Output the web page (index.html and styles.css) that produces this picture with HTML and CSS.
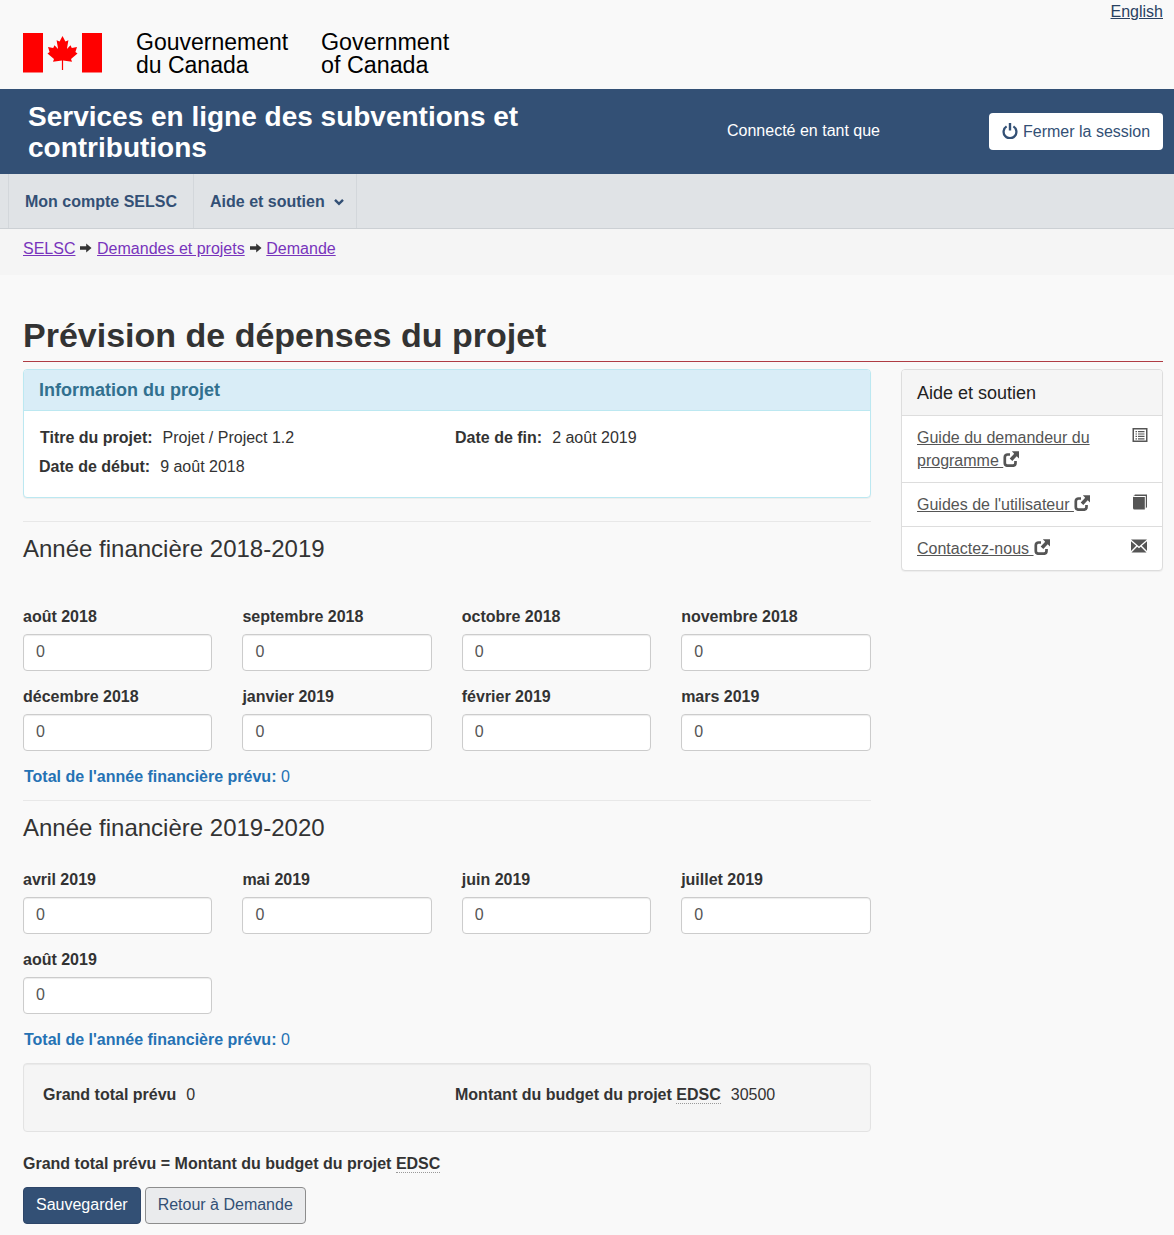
FILE: index.html
```html
<!DOCTYPE html>
<html lang="fr">
<head>
<meta charset="utf-8">
<title>Prévision de dépenses du projet</title>
<link rel="stylesheet" href="styles.css">
</head>
<body>
<svg class="defs" width="0" height="0" aria-hidden="true">
  <defs>
    <symbol id="ext" viewBox="0 0 16 16">
      <path d="M7 3.500H4.500A2.700 2.700 0 0 0 1.800 6.200V12A2.700 2.700 0 0 0 4.500 14.700H9.800A2.700 2.700 0 0 0 12.500 12V10" fill="none" stroke="currentColor" stroke-width="2.700"/>
      <path d="M8.800 0.300H16V7.500L13.700 5.200 9.300 9.900 6.700 7.400 11.200 2.700z" fill="currentColor"/>
    </symbol>
    <symbol id="arrow" viewBox="0 0 12 10">
      <path d="M0 3.200h6.200V0.500L11.500 5 6.200 9.500V6.800H0z" fill="currentColor"/>
    </symbol>
  </defs>
</svg>

<div class="lang"><a href="#">English</a></div>
<header class="sig">
  <svg class="flag" viewBox="0 0 79 40" width="79" height="40" aria-hidden="true">
    <rect x="0" y="0" width="20" height="39.500" fill="#f00"/>
    <rect x="59" y="0" width="20" height="39.500" fill="#f00"/>
    <path fill="#f00" d="M39.500 3 36.600 8.500 33.600 7.300 35.100 16 31.500 12.300 30.200 15 25 14 26.600 19 24.500 20.500 31 26 30 28.700 38.900 27.600V37H40.100V27.600L49 28.700 48 26 54.500 20.500 52.400 19 54 14 48.800 15 47.500 12.300 43.900 16 45.400 7.300 42.400 8.500z"/>
  </svg>
  <div class="sig-text sig-fr">Gouvernement<br>du Canada</div>
  <div class="sig-text">Government<br>of Canada</div>
</header>

<section class="banner">
  <div class="app-title">Services en ligne des subventions et contributions</div>
  <div class="connected">Connecté en tant que</div>
  <a class="logout" href="#">
    <svg class="power" viewBox="0 0 16 16" width="16" height="16" aria-hidden="true">
      <path d="M4.600 3.400A6.400 6.400 0 1 0 11.400 3.400" fill="none" stroke="currentColor" stroke-width="2.300"/>
      <path d="M8 0V7.500" fill="none" stroke="currentColor" stroke-width="2.400"/>
    </svg>
    Fermer la session
  </a>
</section>

<nav class="menu">
  <a class="menu-item" href="#">Mon compte SELSC</a>
  <a class="menu-item" href="#">Aide et soutien
    <svg class="caret" viewBox="0 0 10 8" width="10" height="8" aria-hidden="true"><path d="M1 1.800 5 5.800 9 1.800" fill="none" stroke="currentColor" stroke-width="2.400"/></svg>
  </a>
</nav>

<div class="crumbs">
  <a class="abbr-link" href="#">SELSC</a>
  <svg class="crumb-arrow"><use href="#arrow"/></svg>
  <a href="#">Demandes et projets</a>
  <svg class="crumb-arrow"><use href="#arrow"/></svg>
  <a href="#">Demande</a>
</div>

<main class="page">
  <h1 class="title">Prévision de dépenses du projet</h1>
  <div class="columns">
    <div class="main-col">
      <section class="info">
        <h2 class="info-head">Information du projet</h2>
        <div class="info-body">
          <div class="info-grid">
            <p class="info-first"><b>Titre du projet:</b><span>Projet / Project 1.2</span></p>
            <p><b>Date de fin:</b><span>2 août 2019</span></p>
            <p><b>Date de début:</b><span>9 août 2018</span></p>
          </div>
        </div>
      </section>

      <hr class="rule rule-first">
      <h2 class="year year-first">Année financière 2018-2019</h2>
      <div class="months">
        <label class="field"><span>août 2018</span><input value="0"></label>
        <label class="field"><span>septembre 2018</span><input value="0"></label>
        <label class="field"><span>octobre 2018</span><input value="0"></label>
        <label class="field"><span>novembre 2018</span><input value="0"></label>
        <label class="field"><span>décembre 2018</span><input value="0"></label>
        <label class="field"><span>janvier 2019</span><input value="0"></label>
        <label class="field"><span>février 2019</span><input value="0"></label>
        <label class="field"><span>mars 2019</span><input value="0"></label>
      </div>
      <p class="total"><b>Total de l'année financière prévu:</b> 0</p>

      <hr class="rule rule-second">
      <h2 class="year year-second">Année financière 2019-2020</h2>
      <div class="months">
        <label class="field"><span>avril 2019</span><input value="0"></label>
        <label class="field"><span>mai 2019</span><input value="0"></label>
        <label class="field"><span>juin 2019</span><input value="0"></label>
        <label class="field"><span>juillet 2019</span><input value="0"></label>
        <label class="field"><span>août 2019</span><input value="0"></label>
      </div>
      <p class="total"><b>Total de l'année financière prévu:</b> 0</p>

      <div class="well">
        <p><b>Grand total prévu</b><span>0</span></p>
        <p><b>Montant du budget du projet <abbr>EDSC</abbr></b><span>30500</span></p>
      </div>

      <p class="equation"><b>Grand total prévu = Montant du budget du projet <abbr>EDSC</abbr></b></p>
      <div class="actions">
        <button class="btn btn-primary" type="button">Sauvegarder</button>
        <button class="btn btn-default" type="button">Retour à Demande</button>
      </div>
    </div>

    <aside class="help">
      <h2 class="help-head">Aide et soutien</h2>
      <div class="help-row">
        <a href="#">Guide du demandeur du programme <svg class="ext"><use href="#ext"/></svg></a>
        <svg class="help-icon" viewBox="0 0 16 16" aria-hidden="true">
          <path fill-rule="evenodd" fill="currentColor" d="M.5 1h15v14H.5zM2 2.500v11h12v-11z"/>
          <path fill="currentColor" d="M3.500 4h1.500v1.200H3.500zM6 4h6.500v1.200H6zM3.500 6.400h1.500v1.200H3.500zM6 6.400h6.500v1.200H6zM3.500 8.800h1.500V10H3.500zM6 8.800h6.500V10H6zM3.500 11.200h1.500v1.200H3.500zM6 11.200h6.500v1.200H6z"/>
        </svg>
      </div>
      <div class="help-row">
        <a href="#">Guides de l'utilisateur <svg class="ext"><use href="#ext"/></svg></a>
        <svg class="help-icon" viewBox="0 0 16 16" aria-hidden="true">
          <path fill="currentColor" d="M1 2.500 3 .5h12v12.500l-1.200 1.500v-12.500H2.800v-.5zM1 3h11.800v12.500H2.500A1.500 1.500 0 0 1 1 14z"/>
        </svg>
      </div>
      <div class="help-row">
        <a href="#">Contactez-nous <svg class="ext"><use href="#ext"/></svg></a>
        <svg class="help-icon" viewBox="1 0 16 16" aria-hidden="true">
          <path fill="currentColor" d="M0 1.500h16L8 8.400zM0 3.200 5.200 7.800 0 13zM16 3.200 10.800 7.800 16 13zM6.200 8.800 8 10.300l1.800-1.500L15.500 14.500H.5z"/>
        </svg>
      </div>
    </aside>
  </div>
</main>
</body>
</html>
```

FILE: styles.css
```css
* { box-sizing: border-box; }

html, body { margin: 0; padding: 0; }

body {
  background: #f9f9f9;
  color: #333;
  font-family: "Liberation Sans", Arial, sans-serif;
  font-size: 16px;
  line-height: 23px;
}

.defs { display: block; height: 0; }

.lang {
  display: flex;
  justify-content: flex-end;
  height: 23px;
  padding-right: 11px;
  line-height: 23px;
}
.lang a { color: #284162; }

.sig {
  display: flex;
  align-items: flex-start;
  height: 66px;
  padding: 10px 0 0 23px;
}
.flag { flex: none; }
.sig-text {
  color: #000;
  font-size: 23.300px;
  line-height: 23px;
  margin-left: 34px;
  margin-top: -2px;
}
.sig-fr { font-size: 23px; width: 151px; }

.banner {
  display: flex;
  align-items: center;
  height: 85px;
  background: #335075;
  color: #fff;
  padding: 0 11px 0 28px;
}
.app-title {
  width: 699px;
  padding-right: 180px;
  font-size: 28px;
  font-weight: 700;
  line-height: 31px;
}
.connected { width: 262px; margin-bottom: 2px; }
.logout {
  display: flex;
  align-items: center;
  gap: 5px;
  width: 174px;
  height: 37px;
  padding-left: 13px;
  background: #fff;
  border-radius: 4px;
  color: #335075;
  text-decoration: none;
}
.power { flex: none; margin-top: -2px; }

.menu {
  display: flex;
  height: 55px;
  padding-left: 8px;
  background: #e0e3e6;
  border-bottom: 1px solid #ccd0d4;
}
.menu-item {
  display: flex;
  align-items: center;
  gap: 9px;
  padding: 0 16px;
  border-left: 1px solid #d3d7db;
  color: #335075;
  font-weight: 700;
  text-decoration: none;
}
.menu-item:last-child {
  padding-right: 12px;
  border-right: 1px solid #d3d7db;
}
.caret { flex: none; margin-top: 2px; }

.crumbs {
  display: flex;
  align-items: center;
  gap: 4.800px;
  height: 46px;
  padding: 0 0 8px 23px;
  background: #f5f5f5;
}
.crumbs a { color: #7834bc; }
.crumb-arrow { width: 12px; height: 10px; color: #333; }

.page { padding: 0 11px 0 23px; }

.title {
  margin: 38px 0 7px;
  height: 49px;
  border-bottom: 1px solid #af3c43;
  color: #333;
  font-size: 34px;
  font-weight: 700;
  line-height: 44px;
}

.columns {
  display: flex;
  align-items: flex-start;
  gap: 30px;
  margin-top: 7px;
}
.main-col { width: 848px; flex: none; }

.info {
  height: 129px;
  background: #fff;
  border: 1px solid #bce8f1;
  border-radius: 4px;
  box-shadow: 0 1px 1px rgba(0,0,0,.05);
  overflow: hidden;
}
.info-head {
  margin: 0;
  height: 41px;
  padding: 0 15px;
  background: #d9edf7;
  border-bottom: 1px solid #bce8f1;
  color: #31708f;
  font-size: 18px;
  font-weight: 700;
  line-height: 41px;
}
.info-body { padding: 15px 15px 0; }
.info-grid {
  display: grid;
  grid-template-columns: 416px 1fr;
  row-gap: 6px;
}
.info-grid p { margin: 0; }
.info-grid span { margin-left: 10px; }
.info-first { padding-left: 1px; }

.rule {
  margin: 0;
  border: 0;
  border-top: 1px solid #e8e8e8;
}
.rule-first { margin-top: 23px; }
.rule-second { margin-top: 12px; }

.year {
  margin: 0;
  color: #333;
  font-size: 24px;
  font-weight: 400;
  line-height: 26px;
}
.year-first { margin: 14px 0 43px; }
.year-second { margin: 14px 0 27px; }

.months {
  display: grid;
  grid-template-columns: repeat(4, 1fr);
  column-gap: 30px;
  row-gap: 14px;
  margin-right: .5px;
}
.field { display: block; }
.field span {
  display: block;
  margin-bottom: 6px;
  font-weight: 700;
}
.field input {
  display: block;
  width: 100%;
  height: 37px;
  padding: 5px 12px 7px;
  background: #fff;
  border: 1px solid #ccc;
  border-radius: 4px;
  box-shadow: inset 0 1px 1px rgba(0,0,0,.075);
  color: #555;
  font: inherit;
}

.total {
  margin: 14px 0 0 1px;
  color: #2572b4;
}

.well {
  display: grid;
  grid-template-columns: 412px 1fr;
  height: 69px;
  margin-top: 12px;
  padding: 19px 19px 0;
  background: #f5f5f5;
  border: 1px solid #e3e3e3;
  border-radius: 4px;
  box-shadow: inset 0 1px 1px rgba(0,0,0,.05);
}
.well p { margin: 0; }
.well span { margin-left: 10px; }

abbr { border-bottom: 1px dotted #999; }

.equation { margin: 20px 0 0; }

.actions {
  display: flex;
  gap: 4px;
  margin: 12px 0 0;
}
.btn {
  height: 37px;
  padding: 0 12px 2px;
  border-radius: 4px;
  font: inherit;
}
.btn-primary {
  background: #335075;
  border: 1px solid #2e4669;
  color: #fff;
}
.btn-default {
  background: #eaebed;
  border: 1px solid #8d8d8d;
  color: #335075;
}

.help {
  width: 262px;
  flex: none;
  background: #fff;
  border: 1px solid #ddd;
  border-radius: 4px;
  box-shadow: 0 1px 1px rgba(0,0,0,.05);
  overflow: hidden;
}
.help-head {
  margin: 0;
  height: 46px;
  padding: 0 15px;
  background: #f5f5f5;
  border-bottom: 1px solid #ddd;
  color: #222;
  font-size: 18px;
  font-weight: 400;
  line-height: 46px;
}
.help-row {
  display: flex;
  justify-content: space-between;
  align-items: flex-start;
  padding: 10px 14px 10px 15px;
  border-top: 1px solid #ddd;
}
.help-head + .help-row { border-top: 0; }
.help-row a {
  width: 190px;
  color: #555;
}
.ext {
  width: 16px;
  height: 16px;
  color: #555;
  vertical-align: -1px;
}
.help-icon {
  flex: none;
  width: 16px;
  height: 16px;
  margin-top: 1px;
  color: #555;
  overflow: visible;
}
```
